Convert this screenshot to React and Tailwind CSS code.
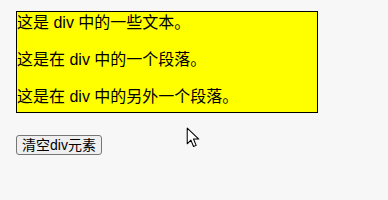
export default function App() {
  return (
    <div
      className="relative min-h-[200px] bg-[#f7f7f7] px-4 pt-[11px] text-black"
      style={{ fontFamily: '"Liberation Sans", "Noto Sans CJK SC", sans-serif' }}
    >
      <div className="h-[102px] w-[302px] overflow-hidden border border-black bg-[#ffff00] text-[16px] leading-[21px]">
        这是 div 中的一些文本。
        <p className="mt-4">这是在 div 中的一个段落。</p>
        <p className="mt-4">这是在 div 中的另外一个段落。</p>
      </div>
      <button className="mt-[22px] h-[20px] rounded-[3px] border border-[#767676] bg-[#efefef] px-[5px] text-[14px] leading-[16px]">
        清空div元素
      </button>
      <svg className="absolute left-[186px] top-[127px]" width="14" height="21" viewBox="0 0 13 20">
        <path d="M1 1 L1 16 L4.5 12.5 L7 18.5 L9.5 17.5 L7 11.5 L12 11.5 Z" fill="white" stroke="black" strokeWidth="1" strokeLinejoin="round" />
      </svg>
    </div>
  )
}
